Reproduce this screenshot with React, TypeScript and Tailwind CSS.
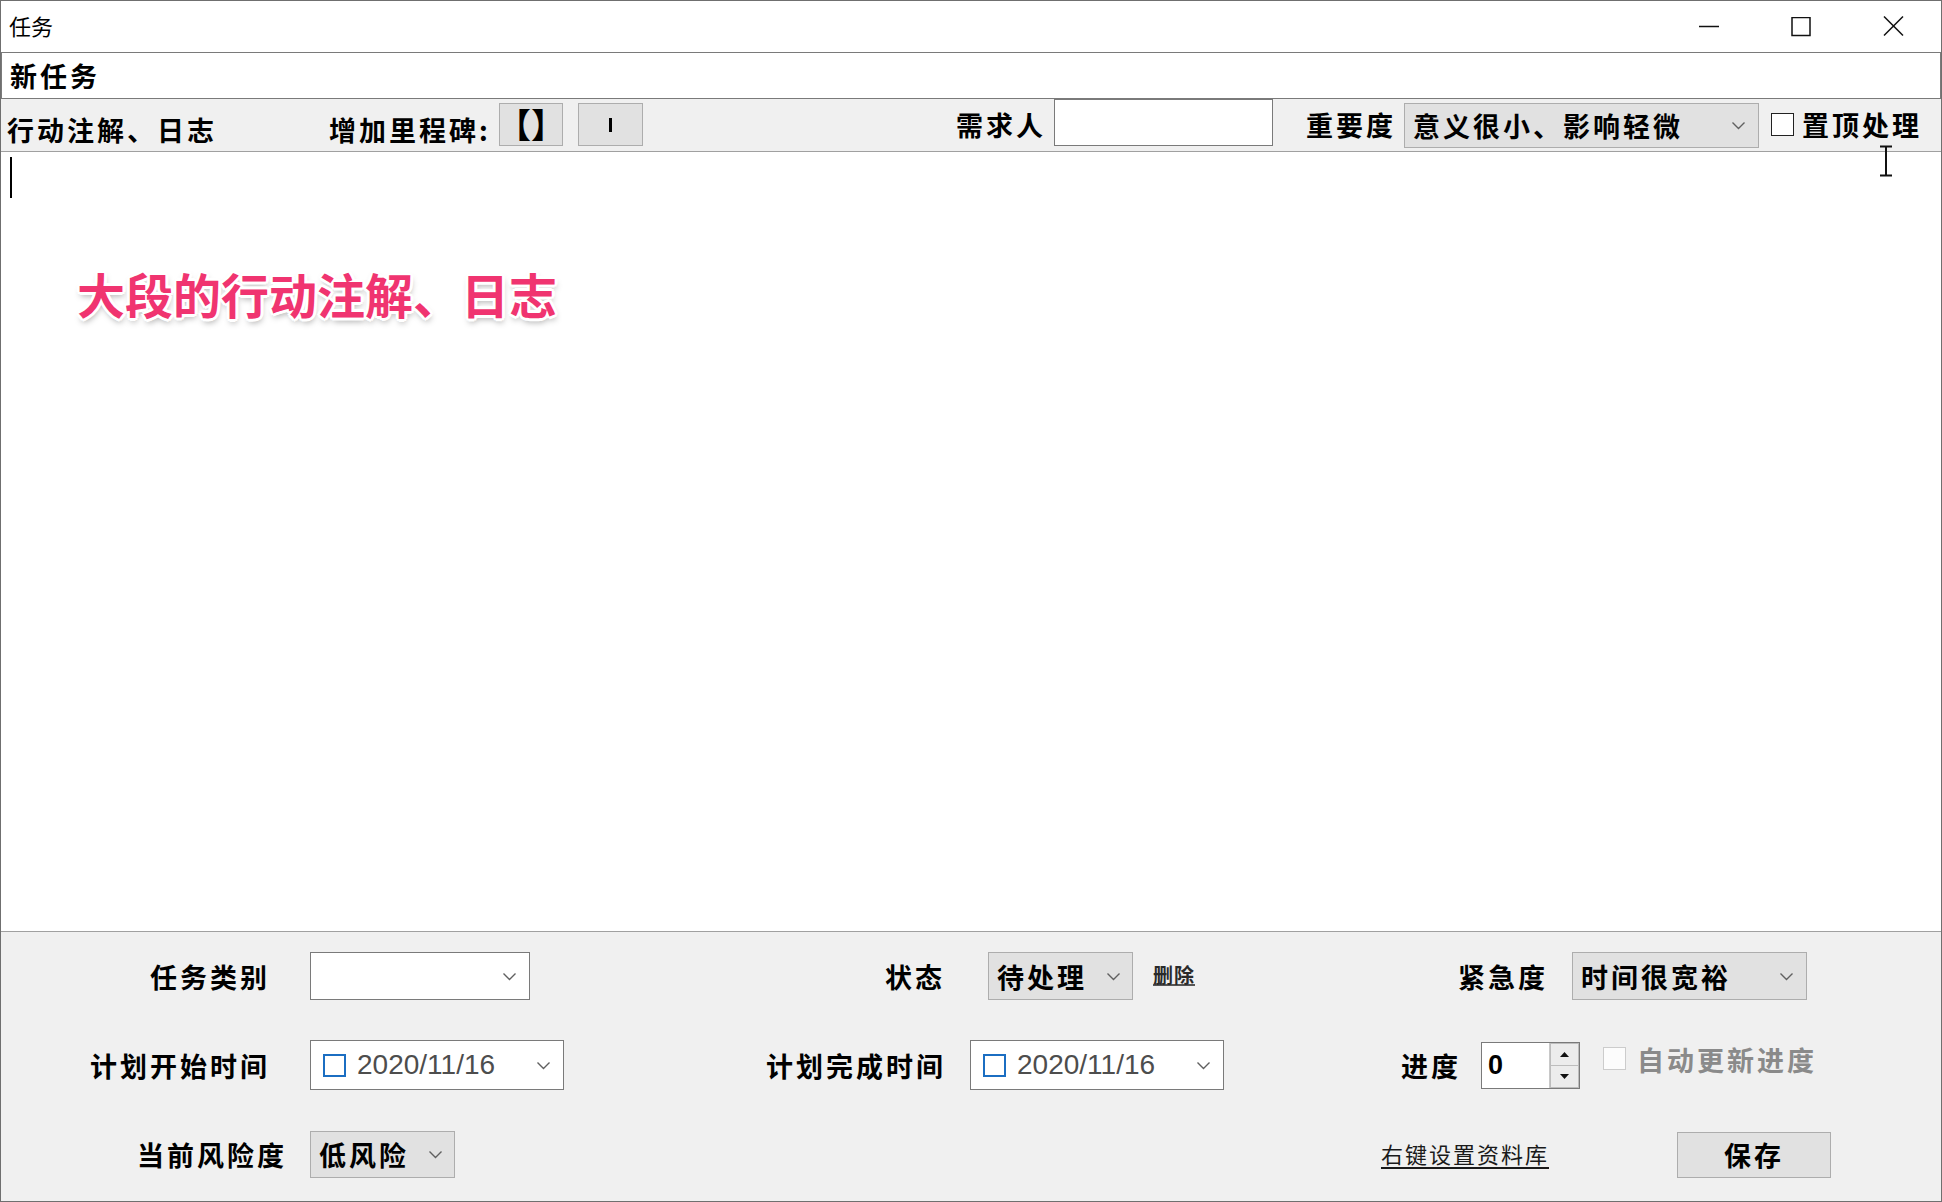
import React from "react";

const Chevron = () => (
  <svg width="15" height="9" viewBox="0 0 15 9" className="shrink-0">
    <polyline points="1.5,1.5 7.5,7.5 13.5,1.5" fill="none" stroke="#606060" strokeWidth="1.4" />
  </svg>
);

const Caret = () => (
  <span className="absolute left-[9px] top-[5px] w-[2px] h-[41px] bg-black" />
);

const DatePicker = ({ className }: { className: string }) => (
  <div className={className}>
    <span className="ml-[12px] w-[23px] h-[23px] border-2 border-[#1b6ec2] bg-white shrink-0" />
    <span className="ml-[11px] text-[28px] leading-none text-[#4d4d4d] font-['Liberation_Sans',sans-serif]">2020/11/16</span>
    <span className="ml-auto mr-[12px] flex">
      <Chevron />
    </span>
  </div>
);

export default function App() {
  const label = "text-[27px] font-bold tracking-[3px] leading-none whitespace-nowrap";
  return (
    <div className="relative w-[1942px] h-[1202px] flex flex-col bg-white border border-[#6f6f6f] overflow-hidden text-black font-['Noto_Sans_CJK_SC','Noto_Sans',sans-serif]">
      {/* title bar */}
      <div className="h-[51px] flex items-center justify-between shrink-0">
        <span className="ml-[8px] mb-[4px] text-[22px] leading-none">任务</span>
        <div className="flex h-full">
          <div className="w-[92px] h-full flex items-center justify-center">
            <svg width="20" height="20" viewBox="0 0 20 20">
              <line x1="0" y1="9.5" x2="20" y2="9.5" stroke="#111" strokeWidth="1.5" />
            </svg>
          </div>
          <div className="w-[92px] h-full flex items-center justify-center">
            <svg width="20" height="20" viewBox="0 0 20 20">
              <rect x="1" y="0.5" width="18" height="18" fill="none" stroke="#111" strokeWidth="1.5" />
            </svg>
          </div>
          <div className="w-[92px] h-full flex items-center justify-center mr-[2px]">
            <svg width="21" height="21" viewBox="0 0 21 21">
              <path d="M1 0.5 L20 19.5 M20 0.5 L1 19.5" fill="none" stroke="#111" strokeWidth="1.5" />
            </svg>
          </div>
        </div>
      </div>

      {/* task name */}
      <div className="h-[47px] shrink-0 border border-[#7a7a7a] bg-white flex items-center">
        <span className={`ml-[8px] ${label}`}>新任务</span>
      </div>

      {/* toolbar */}
      <div className="h-[52px] shrink-0 bg-[#f0f0f0] flex items-center">
        <div className="w-[320px] self-end pb-[5px] pl-[6px]">
          <span className={label}>行动注解、日志</span>
        </div>
        <div className="w-[178px] self-end pb-[5px] pl-[8px]">
          <span className={label}>增加里程碑:</span>
        </div>
        <div className="w-[64px] h-[43px] self-end mb-[5px] bg-[#e1e1e1] border border-[#adadad] flex items-center justify-center">
          <span className="text-[34px] font-bold leading-none -mt-[2px]">【】</span>
        </div>
        <div className="ml-[15px] w-[65px] h-[43px] self-end mb-[5px] bg-[#e1e1e1] border border-[#adadad] flex items-center justify-center">
          <span className="w-[3px] h-[14px] bg-black" />
        </div>
        <div className={`w-[411px] text-right pr-[8px] mb-[2px] ${label}`}>需求人</div>
        <div className="w-[219px] h-[47px] self-start bg-white border border-[#7a7a7a]" />
        <div className={`w-[131px] text-right pr-[8px] mb-[2px] ${label}`}>重要度</div>
        <div className="w-[355px] h-[45px] bg-[#e1e1e1] border border-[#adadad] flex items-center pl-[8px] pr-[12px]">
          <span className={label}>意义很小、影响轻微</span>
          <span className="ml-auto flex">
            <Chevron />
          </span>
        </div>
        <span className="ml-[12px] mb-[2px] w-[23px] h-[23px] border border-[#222] bg-white shrink-0" />
        <span className={`ml-[8px] mb-[2px] ${label}`}>置顶处理</span>
      </div>

      {/* log text area */}
      <div className="relative flex-1 border-t border-b border-[#a0a0a0] bg-white pt-[117px] pl-[76px]">
        <Caret />
        <div className="text-[48px] font-bold leading-none text-[#f03470] [text-shadow:-3px_0_0_#fff,3px_0_0_#fff,0_-3px_0_#fff,0_3px_0_#fff,-2px_-2px_0_#fff,2px_-2px_0_#fff,-2px_2px_0_#fff,2px_2px_0_#fff,1px_4px_6px_rgba(0,0,0,0.35)]">
          大段的行动注解、日志
        </div>
      </div>

      {/* bottom panel */}
      <div className="h-[269px] shrink-0 bg-[#f0f0f0] pt-[20px] flex flex-col">
        <div className="h-[48px] flex items-center">
          <div className={`w-[269px] text-right ${label}`}>任务类别</div>
          <div className="ml-[40px] w-[220px] h-full bg-white border border-[#7a7a7a] flex items-center justify-end pr-[12px]">
            <Chevron />
          </div>
          <div className={`w-[415px] text-right ${label}`}>状态</div>
          <div className="ml-[43px] w-[145px] h-full bg-[#e1e1e1] border border-[#adadad] flex items-center pl-[8px] pr-[11px]">
            <span className={label}>待处理</span>
            <span className="ml-auto flex">
              <Chevron />
            </span>
          </div>
          <div className="ml-[20px] w-[42px]">
            <span className="text-[20px] font-bold tracking-[1px] leading-none text-[#2a2a2a] underline decoration-[#555] underline-offset-1">删除</span>
          </div>
          <div className={`w-[353px] text-right ${label}`}>紧急度</div>
          <div className="ml-[24px] w-[235px] h-full bg-[#e1e1e1] border border-[#adadad] flex items-center pl-[8px] pr-[12px]">
            <span className={label}>时间很宽裕</span>
            <span className="ml-auto flex">
              <Chevron />
            </span>
          </div>
        </div>

        <div className="mt-[40px] h-[50px] flex items-center">
          <div className={`w-[269px] text-right ${label}`}>计划开始时间</div>
          <DatePicker className="ml-[40px] w-[254px] h-full bg-white border border-[#7a7a7a] flex items-center" />
          <div className={`w-[382px] text-right ${label}`}>计划完成时间</div>
          <DatePicker className="ml-[24px] w-[254px] h-full bg-white border border-[#7a7a7a] flex items-center" />
          <div className={`w-[237px] text-right ${label}`}>进度</div>
          <div className="ml-[20px] w-[99px] h-[47px] bg-white border border-[#7a7a7a] flex">
            <span className="flex-1 flex items-center pl-[6px] text-[27px] font-bold leading-none font-['Liberation_Sans',sans-serif]">0</span>
            <div className="w-[30px] flex flex-col border-l border-[#c8c8c8]">
              <div className="flex-1 bg-[#ececec] border border-[#bdbdbd] flex items-center justify-center">
                <svg width="9" height="5" viewBox="0 0 9 5">
                  <polygon points="0,5 4.5,0 9,5" fill="#111" />
                </svg>
              </div>
              <div className="flex-1 bg-[#ececec] border border-t-0 border-[#bdbdbd] flex items-center justify-center">
                <svg width="9" height="5" viewBox="0 0 9 5">
                  <polygon points="0,0 4.5,5 9,0" fill="#111" />
                </svg>
              </div>
            </div>
          </div>
          <span className="ml-[23px] self-start mt-[7px] w-[23px] h-[23px] border border-[#cccccc] bg-[#fcfcfc] shrink-0" />
          <span className={`ml-[11px] self-start mt-[6px] text-[#8a8a8a] ${label}`}>自动更新进度</span>
        </div>

        <div className="mt-[41px] h-[47px] flex items-center">
          <div className={`w-[286px] text-right ${label}`}>当前风险度</div>
          <div className="ml-[23px] w-[145px] h-full bg-[#e1e1e1] border border-[#adadad] flex items-center pl-[8px] pr-[11px]">
            <span className={label}>低风险</span>
            <span className="ml-auto flex">
              <Chevron />
            </span>
          </div>
          <div className="w-[1094px] text-right">
            <span className="text-[22px] tracking-[2px] leading-none underline underline-offset-4 text-[#1a1a1a]">右键设置资料库</span>
          </div>
          <div className="ml-[128px] w-[154px] h-[46px] bg-[#e1e1e1] border border-[#adadad] flex items-center justify-center">
            <span className={`${label} tracking-[2px]`}>保存</span>
          </div>
        </div>
      </div>

      {/* I-beam mouse cursor */}
      <svg className="absolute left-[1878px] top-[144px]" width="14" height="32" viewBox="0 0 14 32">
        <path d="M1 1.5 H13 M7 1.5 V30.5 M1 30.5 H13" fill="none" stroke="#111" strokeWidth="2" />
      </svg>
    </div>
  );
}
